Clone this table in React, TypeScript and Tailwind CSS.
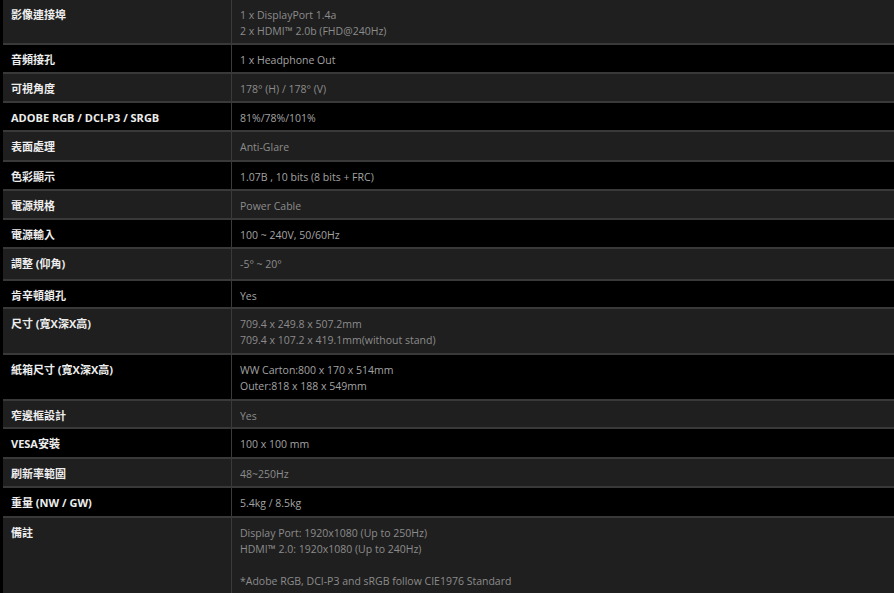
import React from "react";

interface Spec {
  label: string;
  value: string[];
  h: string;
}

const specs: Spec[] = [
  { label: "影像連接埠", value: ["1 x DisplayPort 1.4a", "2 x HDMI™ 2.0b (FHD@240Hz)"], h: "h-[45px]" },
  { label: "音頻接孔", value: ["1 x Headphone Out"], h: "h-[29px]" },
  { label: "可視角度", value: ["178° (H) / 178° (V)"], h: "h-[29px]" },
  { label: "ADOBE RGB / DCI-P3 / SRGB", value: ["81%/78%/101%"], h: "h-[29px]" },
  { label: "表面處理", value: ["Anti-Glare"], h: "h-[30px]" },
  { label: "色彩顯示", value: ["1.07B , 10 bits (8 bits + FRC)"], h: "h-[29px]" },
  { label: "電源規格", value: ["Power Cable"], h: "h-[29px]" },
  { label: "電源輸入", value: ["100 ~ 240V, 50/60Hz"], h: "h-[29px]" },
  { label: "調整 (仰角)", value: ["-5° ~ 20°"], h: "h-[32px]" },
  { label: "肯辛頓鎖孔", value: ["Yes"], h: "h-[28px]" },
  { label: "尺寸 (寬X深X高)", value: ["709.4 x 249.8 x 507.2mm", "709.4 x 107.2 x 419.1mm(without stand)"], h: "h-[46px]" },
  { label: "紙箱尺寸 (寬X深X高)", value: ["WW Carton:800 x 170 x 514mm", "Outer:818 x 188 x 549mm"], h: "h-[46px]" },
  { label: "窄邊框設計", value: ["Yes"], h: "h-[28px]" },
  { label: "VESA安裝", value: ["100 x 100 mm"], h: "h-[30px]" },
  { label: "刷新率範圍", value: ["48~250Hz"], h: "h-[29px]" },
  { label: "重量 (NW / GW)", value: ["5.4kg / 8.5kg"], h: "h-[30px]" },
  {
    label: "備註",
    value: [
      "Display Port: 1920x1080 (Up to 250Hz)",
      "HDMI™ 2.0: 1920x1080 (Up to 240Hz)",
      "",
      "*Adobe RGB, DCI-P3 and sRGB follow CIE1976 Standard",
    ],
    h: "h-[84px]",
  },
];

export default function App() {
  return (
    <div className="w-[894px] h-[593px] overflow-hidden bg-black pl-[3px] font-['Open_Sans','Noto_Sans_CJK_TC',sans-serif]">
      {specs.map((row, i) => (
        <div
          key={row.label}
          className={`flex border-b-2 border-[#393939] ${row.h} ${
            i % 2 === 0 ? "bg-[#1f1f1f]" : "bg-black"
          }`}
        >
          <div className="w-[229px] shrink-0 border-r border-[#3a3a3a] pl-[8px] pt-[7px] text-[11px] leading-[16px] font-bold text-[#ededed]">
            {row.label}
          </div>
          <div
            className={`pl-[8px] pt-[7px] text-[10.5px] leading-[16px] ${
              i % 2 === 0 ? "text-[#8c8c8c]" : "text-[#a3a3a3]"
            }`}
          >
            {row.value.map((v, j) => (
              <div key={j} className="h-[16px] whitespace-nowrap">
                {v}
              </div>
            ))}
          </div>
        </div>
      ))}
    </div>
  );
}
